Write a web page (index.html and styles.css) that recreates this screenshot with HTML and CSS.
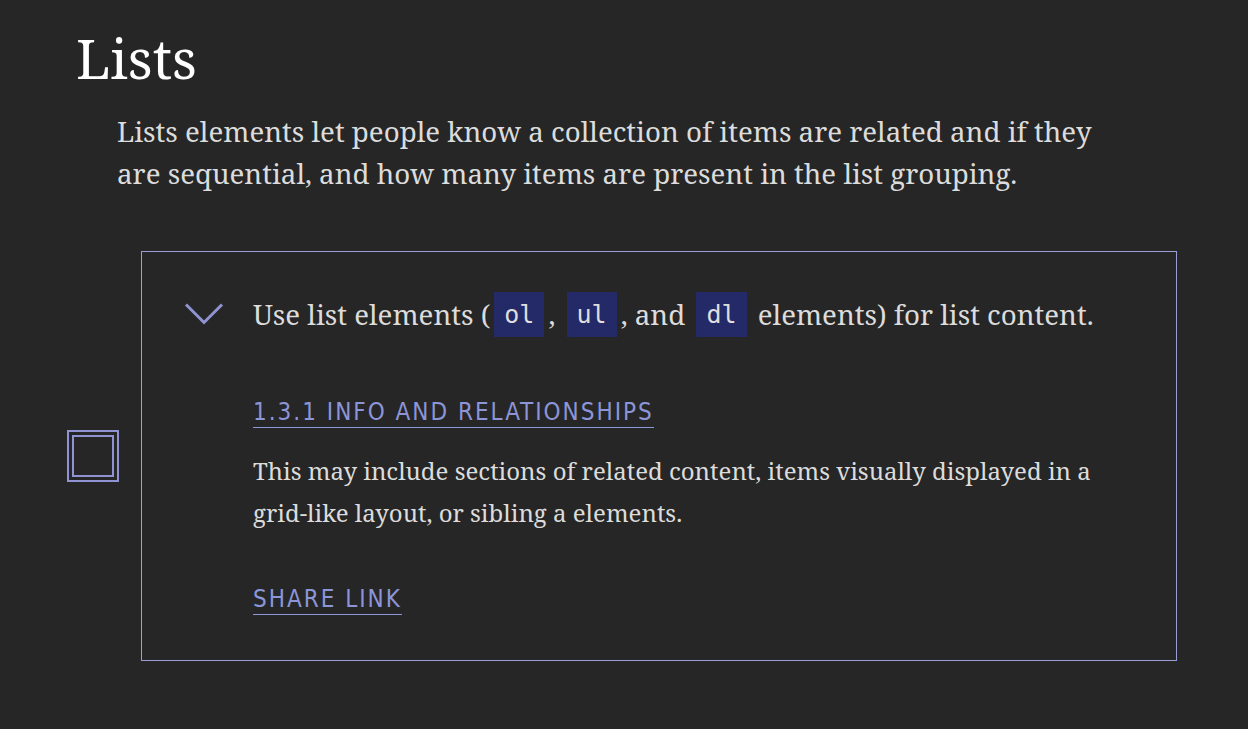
FILE: index.html
```html
<!DOCTYPE html>
<html lang="en">
<head>
<meta charset="utf-8">
<title>Lists</title>
<link rel="stylesheet" href="styles.css">
</head>
<body>
<main class="page">
  <h1 class="title">Lists</h1>
  <p class="intro">Lists elements let people know a collection of items are related and if they are sequential, and how many items are present in the list grouping.</p>
  <div class="item-row">
    <span class="check" aria-hidden="true"></span>
    <section class="card">
      <div class="card-head">
        <svg class="chevron" width="40" height="24" viewBox="0 0 40 24" aria-hidden="true"><path d="M2 2.5 L20 20.5 L38 2.5" fill="none" stroke="#9093d2" stroke-width="3"/></svg>
        <h2 class="card-title">Use list elements (<code>ol</code>, <code>ul</code>, and <code>dl</code> elements) for list content.</h2>
      </div>
      <div class="card-body">
        <a class="mono-link" href="#">1.3.1 INFO AND RELATIONSHIPS</a>
        <p class="desc">This may include sections of related content, items visually displayed in a grid-like layout, or sibling a elements.</p>
        <a class="mono-link share" href="#">SHARE LINK</a>
      </div>
    </section>
  </div>
</main>
</body>
</html>
```
FILE: styles.css
```css
html, body {
  margin: 0;
  padding: 0;
  background: #262626;
}
body {
  font-family: "Noto Serif", "DejaVu Serif", "Liberation Serif", serif;
  color: #dedede;
}
.page {
  padding: 20px 0 0 67px;
}
.title {
  margin: 0 0 0 9px;
  font-size: 55px;
  font-weight: 400;
  line-height: 76px;
  color: #ffffff;
}
.intro {
  margin: 14px 0 0 50px;
  width: 990px;
  font-size: 27.7px;
  line-height: 42px;
  color: #dcdcdc;
}
.item-row {
  display: flex;
  align-items: center;
  gap: 22px;
  margin-top: 57px;
}
.check {
  width: 52px;
  height: 52px;
  box-sizing: border-box;
  border: 7px double #9093d2;
  flex: none;
}
.card {
  width: 1036px;
  height: 410px;
  box-sizing: border-box;
  border: 1px solid #9b9ed4;
  padding: 40px 0 0 42px;
}
.card-head {
  display: flex;
  align-items: center;
  gap: 29px;
}
.chevron {
  flex: none;
  margin-top: -2px;
}
.card-title {
  margin: 0;
  font-size: 27.7px;
  font-weight: 400;
  line-height: 45px;
  color: #dcdcdc;
}
.card-title code {
  display: inline-block;
  vertical-align: top;
  margin: 0 4px;
  font-family: "DejaVu Sans Mono", monospace;
  font-size: 25px;
  line-height: 45px;
  padding: 0 10px;
  background: #242a68;
  color: #dedede;
}
.card-body {
  padding-left: 69px;
  padding-top: 61px;
}
.mono-link {
  display: inline-block;
  font-family: "DejaVu Sans Condensed", "Liberation Sans Narrow", "Roboto", sans-serif;
  font-size: 24px;
  letter-spacing: 2px;
  line-height: 29px;
  color: #8b95d8;
  text-decoration: none;
  border-bottom: 1px solid #8d97dc;
}
.desc {
  margin: 22px 0 0 0;
  width: 870px;
  font-size: 24px;
  line-height: 42px;
  color: #dcdcdc;
}
.share {
  margin-top: 51px;
}
```
